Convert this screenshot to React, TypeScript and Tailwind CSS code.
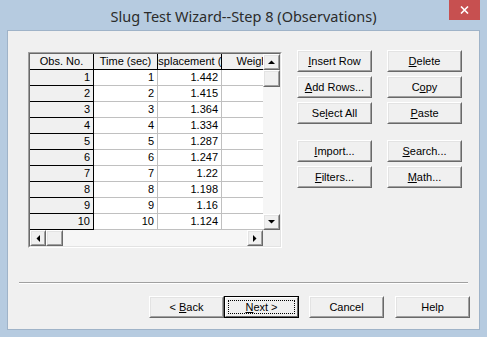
import React from "react";

function Raised({ className = "", children }: { className?: string; children?: React.ReactNode }) {
  return (
    <div className={`border border-t-white border-l-white border-b-[#696969] border-r-[#696969] ${className}`}>
      <div className="w-full h-full border border-t-[#e3e3e3] border-l-[#e3e3e3] border-b-[#a0a0a0] border-r-[#a0a0a0] bg-[#f0f0f0] flex items-center justify-center">
        {children}
      </div>
    </div>
  );
}

function Btn({ children }: { children: React.ReactNode }) {
  return <Raised className="w-[75px] h-[22px]">{children}</Raised>;
}

function Arrow({ dir }: { dir: "up" | "down" | "left" | "right" }) {
  const pts =
    dir === "up"
      ? "0,4 7,4 3.5,0.5"
      : dir === "down"
      ? "0,0 7,0 3.5,3.5"
      : dir === "left"
      ? "4,0 4,7 0.5,3.5"
      : "0,0 0,7 3.5,3.5";
  const w = dir === "up" || dir === "down" ? 7 : 4;
  const h = dir === "up" || dir === "down" ? 4 : 7;
  return (
    <svg width={w} height={h} viewBox={`0 0 ${w} ${h}`}>
      <polygon points={pts} fill="#000" />
    </svg>
  );
}

const rows: [number, number, string][] = [
  [1, 1, "1.442"],
  [2, 2, "1.415"],
  [3, 3, "1.364"],
  [4, 4, "1.334"],
  [5, 5, "1.287"],
  [6, 6, "1.247"],
  [7, 7, "1.22"],
  [8, 8, "1.198"],
  [9, 9, "1.16"],
  [10, 10, "1.124"],
];

export default function App() {
  return (
    <div className="w-[487px] h-[337px] bg-[#b6cbe0] flex flex-col font-['Liberation_Sans',Arial,sans-serif] text-[11px] text-black leading-none">
      {/* Title bar */}
      <div className="h-[30px] relative flex items-center justify-center">
        <span className="font-['Noto_Sans',sans-serif] text-[14.5px] text-[#2b2b2b] mt-[2px]">
          Slug Test Wizard--Step 8 (Observations)
        </span>
        <div className="absolute right-[7px] top-0 w-[31px] h-[20px] bg-[#c75050] flex items-center justify-center">
          <svg width="9" height="8" viewBox="0 0 9 8">
            <path d="M1 0.5 L8 7.5 M8 0.5 L1 7.5" stroke="#fff" strokeWidth="1.6" />
          </svg>
        </div>
      </div>

      {/* Client */}
      <div className="mx-[7px] mb-[7px] flex-1 bg-[#f0f0f0] border border-[#9fb3c8] flex flex-col">
        <div className="flex items-start pt-[19px] pl-[20px]">
          {/* Grid box */}
          <div className="mt-[2px] border border-t-[#a0a0a0] border-l-[#a0a0a0] border-b-white border-r-white">
            <div className="border border-t-[#696969] border-l-[#696969] border-b-[#e3e3e3] border-r-[#e3e3e3] flex flex-col">
              <div className="flex">
                {/* Data area */}
                <div className="w-[233px] overflow-hidden bg-[#f0f0f0]">
                  <div className="w-[256px] flex flex-col">
                    <div className="flex h-[16px]">
                      {["Obs. No.", "Time (sec)", "Displacement (ft)", "Weight"].map((h) => (
                        <div
                          key={h}
                          className="w-[64px] shrink-0 h-full border-r border-b border-black bg-[#f0f0f0] flex items-center justify-center overflow-hidden whitespace-nowrap"
                        >
                          <span className="shrink-0">{h}</span>
                        </div>
                      ))}
                    </div>
                    {rows.map(([a, b, c]) => (
                      <div key={a} className="flex h-[16px]">
                        <div className="w-[64px] shrink-0 h-full border-r border-b border-black bg-[#f0f0f0] flex items-center justify-end pr-[3px]">
                          {a}
                        </div>
                        <div className="w-[64px] shrink-0 h-full border-r border-b border-[#c0c0c0] bg-white flex items-center justify-end pr-[3px]">
                          {b}
                        </div>
                        <div className="w-[64px] shrink-0 h-full border-r border-b border-[#c0c0c0] bg-white flex items-center justify-end pr-[3px]">
                          {c}
                        </div>
                        <div className="w-[64px] shrink-0 h-full border-r border-b border-[#c0c0c0] bg-white" />
                      </div>
                    ))}
                  </div>
                </div>
                {/* Vertical scrollbar */}
                <div className="w-[17px] h-[176px] bg-[#f6f6f6] flex flex-col">
                  <Raised className="w-[17px] h-[16px]">
                    <Arrow dir="up" />
                  </Raised>
                  <Raised className="w-[17px] h-[17px]" />
                  <div className="flex-1" />
                  <Raised className="w-[17px] h-[16px]">
                    <Arrow dir="down" />
                  </Raised>
                </div>
              </div>
              {/* Horizontal scrollbar */}
              <div className="flex h-[16px]">
                <div className="w-[233px] bg-[#f6f6f6] flex">
                  <Raised className="w-[16px] h-[16px]">
                    <Arrow dir="left" />
                  </Raised>
                  <Raised className="w-[17px] h-[16px]" />
                  <div className="flex-1" />
                  <Raised className="w-[16px] h-[16px]">
                    <Arrow dir="right" />
                  </Raised>
                </div>
                <div className="w-[17px] bg-[#f0f0f0]" />
              </div>
            </div>
          </div>

          {/* Buttons */}
          <div className="ml-[15px] flex flex-col">
            <div className="grid grid-cols-[75px_75px] gap-x-[15px] gap-y-[4px]">
              <Btn><span><u>I</u>nsert Row</span></Btn>
              <Btn><span><u>D</u>elete</span></Btn>
              <Btn><span><u>A</u>dd Rows...</span></Btn>
              <Btn><span>C<u>o</u>py</span></Btn>
              <Btn><span>Se<u>l</u>ect All</span></Btn>
              <Btn><span><u>P</u>aste</span></Btn>
            </div>
            <div className="grid grid-cols-[75px_75px] gap-x-[15px] gap-y-[4px] mt-[16px]">
              <Btn><span><u>I</u>mport...</span></Btn>
              <Btn><span><u>S</u>earch...</span></Btn>
              <Btn><span><u>F</u>ilters...</span></Btn>
              <Btn><span><u>M</u>ath...</span></Btn>
            </div>
          </div>
        </div>

        {/* Separator */}
        <div className="mt-[34px] mx-[11px] border-t border-t-[#a0a0a0] border-b border-b-white" />

        {/* Bottom buttons */}
        <div className="mt-[12px] flex justify-end pr-[9px]">
          <Btn><span>&lt; <u>B</u>ack</span></Btn>
          <div className="w-[75px] h-[22px] border border-black">
            <div className="w-full h-full border border-t-white border-l-white border-b-[#696969] border-r-[#696969] bg-[#f0f0f0] p-[2px]">
              <div className="w-full h-full border border-dotted border-black flex items-center justify-center">
                <span><u>N</u>ext &gt;</span>
              </div>
            </div>
          </div>
          <div className="ml-[10px]">
            <Btn>Cancel</Btn>
          </div>
          <div className="ml-[11px]">
            <Btn>Help</Btn>
          </div>
        </div>
      </div>
    </div>
  );
}
